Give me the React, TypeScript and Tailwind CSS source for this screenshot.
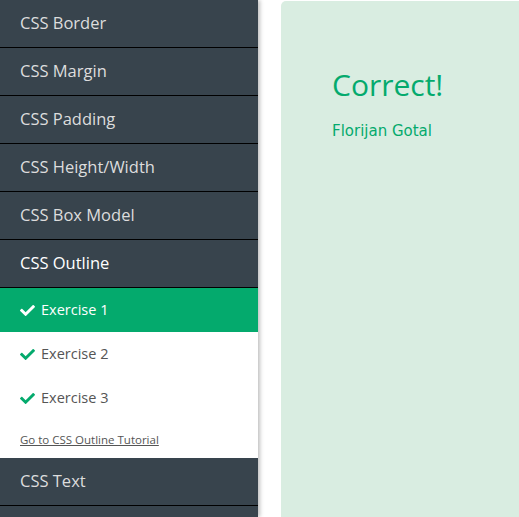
import React from 'react';

const topics = ['CSS Border', 'CSS Margin', 'CSS Padding', 'CSS Height/Width', 'CSS Box Model'];

const Check = ({ className }: { className: string }) => (
  <svg viewBox="0 0 512 512" className={className} fill="currentColor">
    <path d="M173.9 439.4l-166.4-166.4c-10-10-10-26.2 0-36.2l36.2-36.2c10-10 26.2-10 36.2 0L192 312.7 432.1 72.6c10-10 26.2-10 36.2 0l36.2 36.2c10 10 10 26.2 0 36.2l-294.4 294.4c-10 10-26.2 10-36.2 0z" />
  </svg>
);

const App = () => {
  return (
    <div className="flex h-[517px] w-[519px] overflow-hidden bg-white font-['Open_Sans',sans-serif]">
      <nav className="relative z-10 flex w-[258px] shrink-0 flex-col bg-[#38444d] shadow-[2px_0_4px_rgba(0,0,0,0.25)]">
        {topics.map((t) => (
          <div key={t} className="flex h-12 items-center border-b border-black pl-5 text-[16.5px] text-[#dddddd]">
            {t}
          </div>
        ))}
        <div className="flex h-12 items-center border-b border-black pl-5 text-[16.5px] text-white">CSS Outline</div>
        <div className="flex flex-col bg-white">
          <div className="flex h-11 items-center gap-1.5 bg-[#04aa6d] pl-5 text-[14.5px] text-white">
            <Check className="h-[15px] w-[15px]" />
            Exercise 1
          </div>
          <div className="flex h-11 items-center gap-1.5 pl-5 text-[14.5px] text-[#555]">
            <Check className="h-[15px] w-[15px] text-[#04aa6d]" />
            Exercise 2
          </div>
          <div className="flex h-11 items-center gap-1.5 pl-5 text-[14.5px] text-[#555]">
            <Check className="h-[15px] w-[15px] text-[#04aa6d]" />
            Exercise 3
          </div>
          <div className="flex h-[38px] items-center pl-5 pt-[2px]">
            <a className="text-[11.5px] text-[#555] underline">Go to CSS Outline Tutorial</a>
          </div>
        </div>
        <div className="flex h-12 items-center border-b border-black pl-5 text-[16.5px] text-[#dddddd]">CSS Text</div>
        <div className="flex-1" />
      </nav>
      <main className="flex-1 pl-[23px] pt-[1px]">
        <div className="h-full rounded-tl-[5px] bg-[#d9ede1] pl-[51px] pt-[69px]">
          <h1 className="text-[30px] leading-none text-[#04aa6d]">Correct!</h1>
          <p className="mt-[24px] font-['DejaVu_Sans',sans-serif] text-[15px] leading-none text-[#04aa6d]">Florijan Gotal</p>
        </div>
      </main>
    </div>
  );
};

export default App;
